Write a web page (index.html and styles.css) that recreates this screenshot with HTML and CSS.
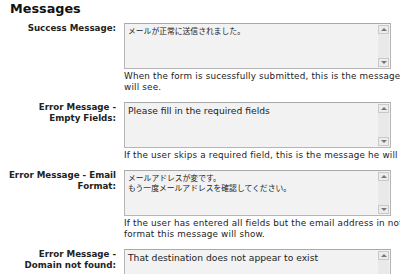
FILE: index.html
```html
<!DOCTYPE html>
<html>
<head>
<meta charset="utf-8">
<link rel="stylesheet" href="styles.css">
</head>
<body>
<h2 class="title">Messages</h2>
<div class="form">
  <div class="label">Success Message:</div>
  <div class="field">
    <div class="ta"><div class="ta-text jp">メールが正常に送信されました。</div><div class="sb"><div class="btn up"></div><div class="track"></div><div class="btn down"></div></div></div>
    <div class="desc">When the form is sucessfully submitted, this is the message the user will see.</div>
  </div>

  <div class="label">Error Message -<br>Empty Fields:</div>
  <div class="field">
    <div class="ta"><div class="ta-text">Please fill in the required fields</div><div class="sb"><div class="btn up"></div><div class="track"></div><div class="btn down"></div></div></div>
    <div class="desc">If the user skips a required field, this is the message he will see.</div>
  </div>

  <div class="label">Error Message - Email Format:</div>
  <div class="field">
    <div class="ta"><div class="ta-text jp">メールアドレスが変です。<br>もう一度メールアドレスを確認してください。</div><div class="sb"><div class="btn up"></div><div class="track"></div><div class="btn down"></div></div></div>
    <div class="desc">If the user has entered all fields but the email address in not correct format this message will show.</div>
  </div>

  <div class="label">Error Message -<br>Domain not found:</div>
  <div class="field">
    <div class="ta"><div class="ta-text">That destination does not appear to exist</div><div class="sb"><div class="btn up"></div><div class="track"></div><div class="btn down"></div></div></div>
    <div class="desc">&nbsp;</div>
  </div>
</div>
</body>
</html>
```
FILE: styles.css
```css
html { overflow: hidden; background: #fff; }
body {
  margin: 0;
  font-family: "DejaVu Sans", Verdana, sans-serif;
  font-size: 8.5px;
  color: #222;
  width: 460px;
}
.title {
  margin: 0;
  padding: 1px 0 0 10px;
  font-size: 12.8px;
  line-height: 16px;
  font-weight: bold;
  color: #111;
  height: 23px;
  box-sizing: border-box;
}
.form {
  display: grid;
  grid-template-columns: 116px 321px;
  column-gap: 8px;
  row-gap: 9px;
}
.label {
  text-align: right;
  font-weight: bold;
  font-size: 8.7px;
  line-height: 11px;
  padding-left: 6px;
  color: #222;
}
.field { display: flex; flex-direction: column; }
.ta {
  width: 267px;
  height: 46px;
  box-sizing: border-box;
  border: 1px solid #b5b5b5;
  border-top-color: #a9a9a9;
  background: #f2f2f2;
  display: flex;
}
.ta-text {
  flex: 1;
  padding: 3px 3px;
  font-family: "DejaVu Sans", "Noto Sans CJK JP", sans-serif;
  font-size: 9.2px;
  line-height: 10px;
  color: #222;
}
.ta-text.jp {
  font-family: "Noto Sans CJK JP", sans-serif;
  font-size: 7.8px;
  line-height: 10px;
  padding-top: 2px;
}
.sb {
  width: 11px;
  display: flex;
  flex-direction: column;
  padding: 1px 1px 1px 0;
}
.track { flex: 1; background: #e9e9e9; }
.btn {
  height: 9px;
  box-sizing: border-box;
  border: 1px solid #c9c9c9;
  background: #ececec;
  display: flex;
  align-items: center;
  justify-content: center;
}
.btn::after {
  content: "";
  width: 0; height: 0;
  border-left: 3px solid transparent;
  border-right: 3px solid transparent;
}
.up::after { border-bottom: 3px solid #777; }
.down::after { border-top: 3px solid #777; }
.desc {
  margin-top: 2px;
  font-size: 8.8px;
  letter-spacing: 0.19px;
  line-height: 11px;
  color: #222;
}
```
